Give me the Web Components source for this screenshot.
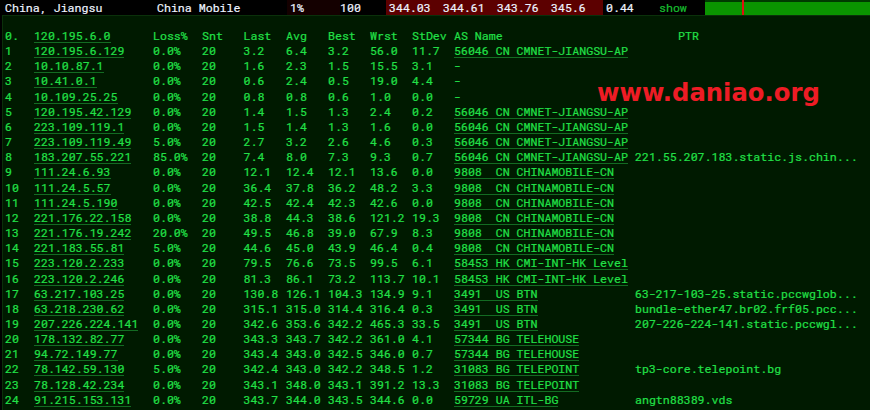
<!DOCTYPE html>
<html><head><meta charset="utf-8"><title>MTR</title>
<style>html,body{margin:0;padding:0;background:#000;overflow:hidden}</style>
</head><body>
<mtr-app></mtr-app>
<script>
const FONT = '"Roboto Mono","DejaVu Sans Mono","Liberation Mono",monospace';
class MtrSummary extends HTMLElement{
  constructor(){super();this.attachShadow({mode:'open'}).innerHTML=`<style>
  :host{display:grid;grid-template-columns:157px 130px 53px 46px 57px 54px 54px 52px 56px 46px 1fr;height:15px;background:#000;color:#eef4ff;font:11.6px/15px ${FONT};-webkit-text-stroke:.2px;white-space:pre;overflow:hidden}
  .a{padding-left:5px}
  .low{background:#140000;padding-left:3px}
  .hi{background:#5c0000}
  .first{padding-left:3px}
  .tight{padding-left:3px}
  .show{color:#18c030}
  .bar{background:#0a9400;border-top:2px solid #003a00;position:relative;display:block;box-sizing:border-box;height:15px}
  .bar i{position:absolute;left:37px;top:-2px;width:2px;height:15px;background:#e01010}
  </style>
  <span class="a">China, Jiangsu</span><span>China Mobile</span><span class="low">1%</span><span>100</span><span class="hi first">344.03</span><span class="hi">344.61</span><span class="hi">343.76</span><span class="hi">345.6</span><span class="tight">0.44</span><span class="show">show</span><span class="bar"><i></i></span>`;}
}
class MtrRow extends HTMLElement{
  constructor(){super();this.attachShadow({mode:'open'});}
  connectedCallback(){
    const d=this.getAttribute('data').split('|');
    const head=this.hasAttribute('head');
    const u=(s)=>s&&s!=='-'?`<b>${s}</b>`:(s||'');
    this.shadowRoot.innerHTML=`<style>
    :host{display:grid;grid-template-columns:29px 119px 49px 41.5px 42.5px 42px 42px 42px 42px 181px 1fr;height:15.17px;line-height:15.17px;white-space:pre}
    b{font-weight:normal;display:inline-block;line-height:13px;border-bottom:1px solid #136b22}
    .ptr{padding-left:${head?'43px':'0'}}
    </style>
    <span>${d[0]}</span><span>${u(d[1])}</span><span>${d[2]}</span><span>${d[3]}</span><span>${d[4]}</span><span>${d[5]}</span><span>${d[6]}</span><span>${d[7]}</span><span>${d[8]}</span><span>${head?d[9]:u(d[9])}</span><span class="ptr">${d[10]||''}</span>`;
  }
}
class MtrApp extends HTMLElement{
  constructor(){super();
    const J='56046 CN CMNET-JIANGSU-AP',M='9808  CN CHINAMOBILE-CN',H='58453 HK CMI-INT-HK Level',B='3491  US BTN',T='57344 BG TELEHOUSE',P='31083 BG TELEPOINT';
    const rows=[
    '1|120.195.6.129|0.0%|20|3.2|6.4|3.2|56.0|11.7|'+J,
    '2|10.10.87.1|0.0%|20|1.6|2.3|1.5|15.5|3.1|-',
    '3|10.41.0.1|0.0%|20|0.6|2.4|0.5|19.0|4.4|-',
    '4|10.109.25.25|0.0%|20|0.8|0.8|0.6|1.0|0.0|-',
    '5|120.195.42.129|0.0%|20|1.4|1.5|1.3|2.4|0.2|'+J,
    '6|223.109.119.1|0.0%|20|1.5|1.4|1.3|1.6|0.0|'+J,
    '7|223.109.119.49|5.0%|20|2.7|3.2|2.6|4.6|0.3|'+J,
    '8|183.207.55.221|85.0%|20|7.4|8.0|7.3|9.3|0.7|'+J+'|221.55.207.183.static.js.chin...',
    '9|111.24.6.93|0.0%|20|12.1|12.4|12.1|13.6|0.0|'+M,
    '10|111.24.5.57|0.0%|20|36.4|37.8|36.2|48.2|3.3|'+M,
    '11|111.24.5.190|0.0%|20|42.5|42.4|42.3|42.6|0.0|'+M,
    '12|221.176.22.158|0.0%|20|38.8|44.3|38.6|121.2|19.3|'+M,
    '13|221.176.19.242|20.0%|20|49.5|46.8|39.0|67.9|8.3|'+M,
    '14|221.183.55.81|5.0%|20|44.6|45.0|43.9|46.4|0.4|'+M,
    '15|223.120.2.233|0.0%|20|79.5|76.6|73.5|99.5|6.1|'+H,
    '16|223.120.2.246|0.0%|20|81.3|86.1|73.2|113.7|10.1|'+H,
    '17|63.217.103.25|0.0%|20|130.8|126.1|104.3|134.9|9.1|'+B+'|63-217-103-25.static.pccwglob...',
    '18|63.218.230.62|0.0%|20|315.1|315.0|314.4|316.4|0.3|'+B+'|bundle-ether47.br02.frf05.pcc...',
    '19|207.226.224.141|0.0%|20|342.6|353.6|342.2|465.3|33.5|'+B+'|207-226-224-141.static.pccwgl...',
    '20|178.132.82.77|0.0%|20|343.3|343.7|342.2|361.0|4.1|'+T,
    '21|94.72.149.77|0.0%|20|343.4|343.0|342.5|346.0|0.7|'+T,
    '22|78.142.59.130|5.0%|20|342.4|343.0|342.2|348.5|1.2|'+P+'|tp3-core.telepoint.bg',
    '23|78.128.42.234|0.0%|20|343.1|348.0|343.1|391.2|13.3|'+P,
    '24|91.215.153.131|0.0%|20|343.7|344.0|343.5|344.6|0.0|59729 UA ITL-BG|angtn88389.vds'];
    this.attachShadow({mode:'open'}).innerHTML=`<style>
    :host{display:block;width:870px;height:410px;position:relative;overflow:hidden;background:#000}
    .panel{box-sizing:border-box;height:395px;background:#001a00;border-top:1px solid #0a300a;border-left:1px solid #0a300a;margin-left:2px;padding:12px 0 0 2px;color:#22e048;font:11.6px/15.17px ${FONT};-webkit-text-stroke:.2px}
    .mark{position:absolute;left:597px;top:76px;font:bold 24.3px/34px "DejaVu Sans",sans-serif;color:#ee1c25;white-space:nowrap}
    </style>
    <mtr-summary></mtr-summary>
    <div class="panel"><mtr-row head data="0.|120.195.6.0|Loss%|Snt|Last|Avg|Best|Wrst|StDev|AS Name|PTR"></mtr-row>
    ${rows.map(r=>`<mtr-row data="${r}"></mtr-row>`).join('')}</div>
    <div class="mark">www.daniao.org</div>`;
  }
}
customElements.define('mtr-summary',MtrSummary);
customElements.define('mtr-row',MtrRow);
customElements.define('mtr-app',MtrApp);
</script>
</body></html>
